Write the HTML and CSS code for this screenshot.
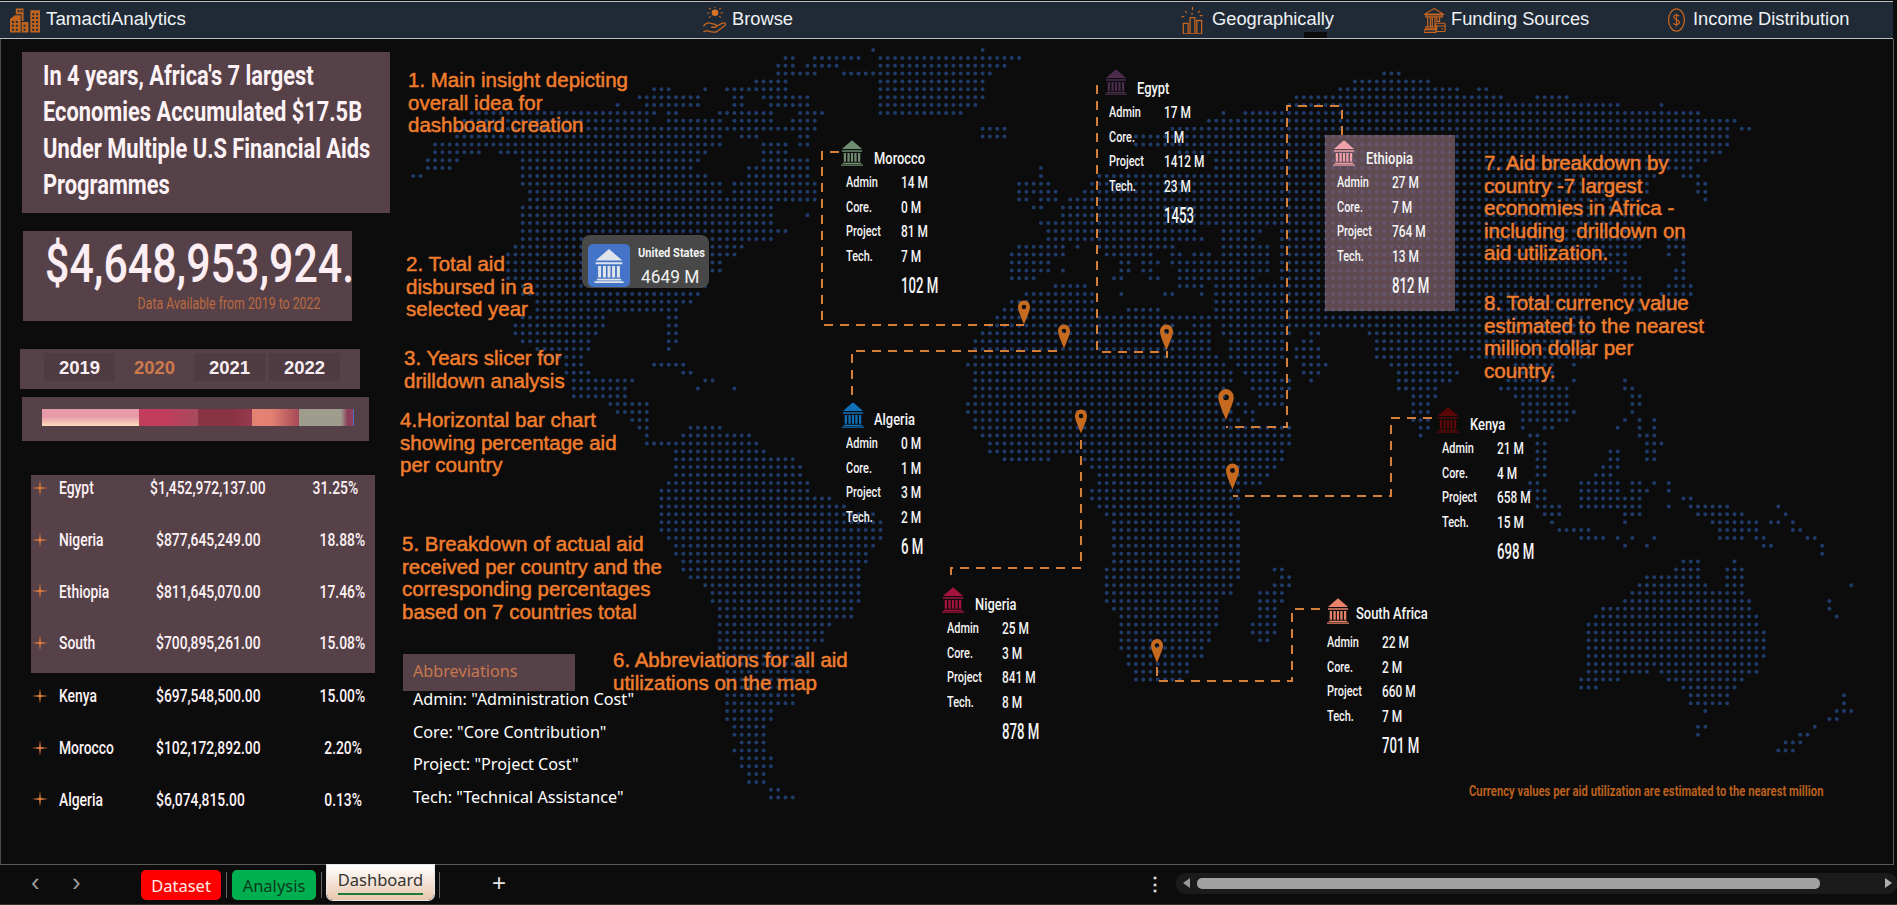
FILE: index.html
```html
<!DOCTYPE html>
<html lang="en">
<head>
<meta charset="utf-8">
<title>TamactiAnalytics Dashboard</title>
<link rel="stylesheet" href="styles.css">
</head>
<body>
<svg class="defs" width="0" height="0" aria-hidden="true">
  <symbol id="bank" viewBox="0 0 24 28">
    <path d="M12 0 23 9.5H1ZM1 11H23V12.5H1ZM3 14H5.5V23.5H3ZM7 14H9.5V23.5H7ZM10.8 14H13.2V23.5H10.8ZM14.5 14H17V23.5H14.5ZM18.5 14H21V23.5H18.5ZM2 24.5H22V26H2ZM0 26.5H24V28H0Z"/>
  </symbol>
  <symbol id="pin" viewBox="0 0 16 32">
    <path fill-rule="evenodd" d="M8 0C3.6 0 0 3.8 0 8.6 0 14 5.4 25 8 32 10.6 25 16 14 16 8.6 16 3.8 12.4 0 8 0ZM8 5.6A3 3 0 1 1 8 11.6 3 3 0 1 1 8 5.6Z"/>
  </symbol>
  <symbol id="star" viewBox="0 0 16 16">
    <path d="M8 0 8.9 7.1 16 8 8.9 8.9 8 16 7.1 8.9 0 8 7.1 7.1Z"/>
  </symbol>
</svg>

<div class="app">
  <header class="topbar">
    <div class="brand">
      <svg class="logo" viewBox="0 0 31 25">
        <path d="M0 11 5 7H11V25H0ZM12 14H19V25H12ZM21 2H31V25H21ZM6 0H14V13H12V6H6Z"/>
        <path class="win" d="M2 13h2v2H2zM6 13h2v2H6zM2 17h2v2H2zM6 17h2v2H6zM2 21h2v2H2zM6 21h2v2H6zM14 17h2v2h-2zM14 21h2v2h-2zM23 5h2v2h-2zM27 5h2v2h-2zM23 9h2v2h-2zM27 9h2v2h-2zM23 13h2v2h-2zM27 13h2v2h-2zM23 17h2v2h-2zM27 17h2v2h-2zM23 21h2v2h-2zM27 21h2v2h-2zM8 2h2v2H8zM11 2h2v2h-2z"/>
      </svg>
      <span>TamactiAnalytics</span>
    </div>
    <div class="nav nav-browse">
      <svg class="nav-icon" viewBox="0 0 26 28">
        <circle class="fill" cx="13" cy="6" r="3.4"/>
        <path d="M13 0v1M5 6H7M19 6h2M7 1l1.5 1.5M19 1l-1.5 1.5M7 11l1.5-1.5M19 11l-1.5-1.5"/>
        <path d="M1 20c2-3 5-4 8-3l4 1c2 .6 2 3 0 3H9M13 21l7-4c3-1.5 5 .5 3 2.500l-8 6c-3 1.500-7 0-10-1l-4 1"/>
      </svg>
      <span>Browse</span>
    </div>
    <div class="nav nav-geo">
      <svg class="nav-icon" viewBox="0 0 24 28">
        <path d="M3 17h5v11H3zM10 11h5v17h-5zM17 14h5v14h-5zM12.500 0v3M5 4l1.500 2M20 4l-1.500 2M1 10h3M20 9h3M12 6v2"/>
      </svg>
      <span>Geographically</span>
      <i class="nav-mark"></i>
    </div>
    <div class="nav nav-fund">
      <svg class="nav-icon" viewBox="0 0 24 28">
        <path d="M11 1 21 7H1ZM2 8h18v2H2ZM4 10h3v11H4ZM9 10h3v11H9ZM14 10h3v5h-3ZM2 21h12v2H2ZM0 24h13v3H0Z"/>
        <rect x="13" y="17" width="10" height="9" rx="1"/>
        <path d="M13 20h10M19 23h2"/>
      </svg>
      <span>Funding Sources</span>
    </div>
    <div class="nav nav-income">
      <svg class="nav-icon" viewBox="0 0 20 28">
        <ellipse cx="10" cy="14" rx="8.500" ry="12"/>
        <path d="M13 10c-1-2-6-2-6 1 0 3 6 2 6 5.500 0 3-5 3-6.500 1M10 7v14"/>
      </svg>
      <span>Income Distribution</span>
    </div>
  </header>

  <main class="canvas">
    <svg class="map" viewBox="0 39 1897 826" width="1897" height="826" aria-hidden="true">
      <path id="dots" class="dots"/>
      <g class="leads">
        <path d="M839 152H822V325H1024"/>
        <path d="M852 395V351H1064"/>
        <path d="M1097 85V352H1167V358"/>
        <path d="M1342 135V106H1287V427H1226"/>
        <path d="M1432 418H1391V496H1233"/>
        <path d="M1081 440V568H951V575"/>
        <path d="M1320 609H1292V681H1157V665"/>
      </g>
      <g class="pins">
        <use href="#pin" x="1018" y="299" width="12" height="27"/>
        <use href="#pin" x="1058" y="321" width="12" height="31"/>
        <use href="#pin" x="1160" y="322" width="13" height="31"/>
        <use href="#pin" x="1218" y="389" width="16" height="31"/>
        <use href="#pin" x="1075" y="406" width="12" height="31"/>
        <use href="#pin" x="1226" y="461" width="13" height="31"/>
        <use href="#pin" x="1151" y="637" width="12" height="28"/>
      </g>
    </svg>

    <section class="left">
      <div class="card hero din">
        <p>In 4 years, Africa's 7 largest</p>
        <p>Economies Accumulated $17.5B</p>
        <p>Under Multiple U.S Financial Aids</p>
        <p>Programmes</p>
      </div>
      <div class="card total din">
        <div class="total-value">$4,648,953,924.</div>
        <div class="total-note">Data Available from 2019 to 2022</div>
      </div>
      <div class="card slicer">
        <span class="year">2019</span>
        <span class="year year-on">2020</span>
        <span class="year">2021</span>
        <span class="year">2022</span>
      </div>
      <div class="card barcard">
        <div class="stack">
          <i class="seg seg1"></i><i class="seg seg2"></i><i class="seg seg3"></i><i class="seg seg4"></i><i class="seg seg5"></i><i class="seg seg6"></i>
        </div>
      </div>
      <div class="table din">
        <div class="table-hi">
          <div class="row"><svg class="star"><use href="#star"/></svg><span>Egypt</span><span class="amt amt-wide">$1,452,972,137.00</span><span class="pct pct-in">31.25%</span></div>
          <div class="row"><svg class="star"><use href="#star"/></svg><span>Nigeria</span><span class="amt">$877,645,249.00</span><span class="pct">18.88%</span></div>
          <div class="row"><svg class="star"><use href="#star"/></svg><span>Ethiopia</span><span class="amt">$811,645,070.00</span><span class="pct">17.46%</span></div>
          <div class="row"><svg class="star"><use href="#star"/></svg><span>South</span><span class="amt">$700,895,261.00</span><span class="pct">15.08%</span></div>
        </div>
        <div class="row"><svg class="star"><use href="#star"/></svg><span>Kenya</span><span class="amt">$697,548,500.00</span><span class="pct">15.00%</span></div>
        <div class="row"><svg class="star"><use href="#star"/></svg><span>Morocco</span><span class="amt">$102,172,892.00</span><span class="pct pct-mid">2.20%</span></div>
        <div class="row"><svg class="star"><use href="#star"/></svg><span>Algeria</span><span class="amt">$6,074,815.00</span><span class="pct pct-mid">0.13%</span></div>
      </div>
    </section>

    <p class="note n1">1. Main insight depicting<br>overall idea for<br>dashboard creation</p>
    <p class="note n2">2. Total aid<br>disbursed in a<br>selected year</p>
    <p class="note n3">3. Years slicer for<br>drilldown analysis</p>
    <p class="note n4">4.Horizontal bar chart<br>showing percentage aid<br>per country</p>
    <p class="note n5">5. Breakdown of actual aid<br>received per country and the<br>corresponding percentages<br>based on 7 countries total</p>
    <p class="note n6">6. Abbreviations for all aid<br>utilizations on the map</p>
    <p class="note n7">7. Aid breakdown by<br>country -7 largest<br>economies in Africa -<br>including&nbsp; drilldown on<br>aid utilization.</p>
    <p class="note n8">8. Total currency value<br>estimated to the nearest<br>million dollar per<br>country.</p>

    <section class="abbr">
      <h2 class="abbr-title">Abbreviations</h2>
      <p>Admin: "Administration Cost"</p>
      <p>Core: "Core Contribution"</p>
      <p>Project: "Project Cost"</p>
      <p>Tech: "Technical Assistance"</p>
    </section>

    <div class="us din">
      <div class="us-tile"><svg class="us-bank"><use href="#bank"/></svg></div>
      <div class="us-text"><b>United States</b><span>4649 M</span></div>
    </div>

    <article class="callout din c-morocco">
      <svg class="bank"><use href="#bank"/></svg><h3>Morocco</h3>
      <span>Admin</span><b>14 M</b><span>Core.</span><b>0 M</b><span>Project</span><b>81 M</b><span>Tech.</span><b>7 M</b><span></span><strong>102 M</strong>
    </article>
    <article class="callout din c-egypt">
      <svg class="bank"><use href="#bank"/></svg><h3>Egypt</h3>
      <span>Admin</span><b>17 M</b><span>Core.</span><b>1 M</b><span>Project</span><b>1412 M</b><span>Tech.</span><b>23 M</b><span></span><strong>1453</strong>
    </article>
    <article class="callout din c-ethiopia">
      <svg class="bank"><use href="#bank"/></svg><h3>Ethiopia</h3>
      <span>Admin</span><b>27 M</b><span>Core.</span><b>7 M</b><span>Project</span><b>764 M</b><span>Tech.</span><b>13 M</b><span></span><strong>812 M</strong>
    </article>
    <article class="callout din c-algeria">
      <svg class="bank"><use href="#bank"/></svg><h3>Algeria</h3>
      <span>Admin</span><b>0 M</b><span>Core.</span><b>1 M</b><span>Project</span><b>3 M</b><span>Tech.</span><b>2 M</b><span></span><strong>6 M</strong>
    </article>
    <article class="callout din c-kenya">
      <svg class="bank"><use href="#bank"/></svg><h3>Kenya</h3>
      <span>Admin</span><b>21 M</b><span>Core.</span><b>4 M</b><span>Project</span><b>658 M</b><span>Tech.</span><b>15 M</b><span></span><strong>698 M</strong>
    </article>
    <article class="callout din c-nigeria">
      <svg class="bank"><use href="#bank"/></svg><h3>Nigeria</h3>
      <span>Admin</span><b>25 M</b><span>Core.</span><b>3 M</b><span>Project</span><b>841 M</b><span>Tech.</span><b>8 M</b><span></span><strong>878 M</strong>
    </article>
    <article class="callout din c-south">
      <svg class="bank"><use href="#bank"/></svg><h3>South Africa</h3>
      <span>Admin</span><b>22 M</b><span>Core.</span><b>2 M</b><span>Project</span><b>660 M</b><span>Tech.</span><b>7 M</b><span></span><strong>701 M</strong>
    </article>

    <p class="foot din">Currency values per aid utilization are estimated to the nearest million</p>
  </main>

  <footer class="tabs">
    <span class="arrow arrow-l">&#x2039;</span>
    <span class="arrow arrow-r">&#x203A;</span>
    <span class="tab tab-red">Dataset</span><i class="tab-sep"></i>
    <span class="tab tab-green">Analysis</span><i class="tab-sep"></i>
    <span class="tab tab-active"><u>Dashboard</u></span><i class="tab-sep"></i>
    <span class="tab-add">+</span>
    <span class="tab-more">&#8942;</span>
    <div class="scroll">
      <i class="scroll-l"></i>
      <i class="scroll-thumb"></i>
      <i class="scroll-r"></i>
    </div>
  </footer>
</div>
<script src="map.js"></script>
</body>
</html>
```
FILE: styles.css
```css
* { box-sizing: border-box; }
html, body { margin: 0; height: 100%; overflow: hidden; background: #0c0c0c; }
p, h2, h3 { margin: 0; font-weight: inherit; font-size: inherit; }
.defs { position: absolute; }

.din { font-family: Roboto, sans-serif; }

.app { width: 1897px; height: 905px; display: flex; flex-direction: column; }

/* top bar */
.topbar {
  height: 38px; width: 1893px; flex: none; display: flex; align-items: center; position: relative;
  background: #1f2a36; border-top: 1px solid #b9bdc0; border-bottom: 1px solid #b9bdc0; margin-top: 1px;
  font: 18.300px "Liberation Sans", sans-serif; color: #eef1f4;
}
.topbar span { margin-top: -3px; }
.brand { display: flex; align-items: center; gap: 6px; margin-left: 10px; width: 692px; font-size: 18.800px; }
.logo { width: 30px; height: 25px; fill: #bf641f; }
.logo .win { fill: #1f2a36; }
.nav { display: flex; align-items: center; gap: 4px; position: relative; }
.nav-icon { width: 26px; height: 27px; fill: none; stroke: #c8651f; stroke-width: 1.300; }
.nav-icon .fill { fill: #d9752a; stroke: none; }
.nav-browse { width: 478px; }
.nav-geo { width: 244px; gap: 8px; }
.nav-geo .nav-icon { width: 24px; }
.nav-fund { width: 243px; gap: 5px; }
.nav-fund .nav-icon { width: 22px; height: 29px; }
.nav-income { gap: 7px; }
.nav-income .nav-icon { width: 19px; height: 26px; }
.nav-mark { position: absolute; left: 124px; top: 25px; width: 23px; height: 6px; background: #0c0c0c; }

/* canvas */
.canvas {
  position: relative; flex: none; width: 1894px; height: 826px; background: #0c0c0c;
  border-left: 1px solid #4a4a4a; border-right: 1px solid #5a5a5a; border-bottom: 1px solid #5a5a5a;
}
.map { position: absolute; left: -1px; top: 0; }
.dots { fill: none; stroke: #1f3b68; stroke-width: 4; stroke-linecap: round; }
.leads path { fill: none; stroke: #d67f38; stroke-width: 2; stroke-dasharray: 9 7; }
.pins { fill: #c56a1e; }

/* left column */
.left { position: relative; display: flex; flex-direction: column; align-items: flex-start; padding-top: 13px; }
.card { background: #574148; }
.hero {
  margin-left: 21px; width: 368px; height: 161px; padding: 6px 0 0 21px;
  color: #fdf3f6; font-size: 28px; font-weight: 700; line-height: 36.300px;
}
.hero p { width: max-content; white-space: nowrap; transform: scaleX(.78); transform-origin: left center; }
.total { margin: 18px 0 0 22px; width: 329px; height: 90px; position: relative; color: #fdeef3; padding: 3px 0 0 22px; }
.total-value { width: max-content; font-size: 53px; line-height: 60px; font-weight: 500; white-space: nowrap; transform: scaleX(.81); transform-origin: left center; }
.total-note { position: absolute; right: 32px; bottom: 8px; font-size: 16px; line-height: 18px; color: #b96a40; white-space: nowrap; transform: scaleX(.77); transform-origin: right center; }
.slicer { margin: 28px 0 0 19px; width: 340px; height: 40px; display: flex; padding: 4px 0 0 24px; gap: 4px; }
.year {
  width: 71px; height: 28px; text-align: center; font: 700 18.500px/29px "Liberation Sans", sans-serif; color: #f8eef3;
  background: conic-gradient(#46353b 25%, transparent 0 50%, #46353b 0 75%, transparent 0) 0 0 / 2px 2px;
}
.year-on { background: none; color: #cc7a4c; }
.barcard { margin: 8px 0 0 21px; width: 347px; height: 44px; padding: 12px 0 0 20px; }
.stack { display: flex; width: 312px; height: 17px; }
.seg { display: block; height: 100%; }
.seg1 { width: 97px; background: linear-gradient(#e79aa8 45%, #fcdcbc); }
.seg2 { width: 59px; background: linear-gradient(90deg, #c23c5c 40%, #a84a5e); }
.seg3 { width: 54px; background: linear-gradient(90deg, #8a3343 60%, #96394f); }
.seg4 { width: 47px; background: linear-gradient(90deg, #e38272 40%, #a64a58); }
.seg5 { width: 42px; background: #9e9c8d; }
.seg6 { width: 13px; background: linear-gradient(90deg, #9e9c8d, #8c3f5d 50%, #8c3f5d 90%, #5a6ac0 90%); }

.table { margin: 34px 0 0 30px; width: 344px; color: #fdf3f6; font-size: 18px; font-weight: 500; }
.table-hi { display: flow-root; background: #574148; height: 198px; margin-bottom: -3px; }
.row { display: grid; grid-template-columns: 28px 97px 164px 55px; align-items: center; height: 51.700px; white-space: nowrap; }
.table-hi .row:first-child { margin-top: -13px; }
.row span { justify-self: start; transform: scaleX(.77); transform-origin: left center; }
.row .pct { justify-self: end; margin-right: 10px; transform-origin: right center; }
.star { width: 18px; height: 16px; fill: #db7a3e; margin-left: 0; }
.row .amt-wide { margin-left: -6px; }
.row .pct-in { margin-right: 17px; }
.row .pct-mid { margin-right: 13px; }

/* annotations */
.note {
  position: absolute; font: 20.500px/22.500px "Liberation Sans", sans-serif; color: #ef7d2d;
  -webkit-text-stroke: .5px #ef7d2d; white-space: nowrap;
}
.n1 { left: 407px; top: 30px; }
.n2 { left: 405px; top: 214px; }
.n3 { left: 403px; top: 308px; }
.n4 { left: 399px; top: 370px; }
.n5 { left: 401px; top: 494px; }
.n6 { left: 612px; top: 610px; }
.n7 { left: 1483px; top: 113px; }
.n8 { left: 1483px; top: 253px; }

/* abbreviations */
.abbr { position: absolute; left: 402px; top: 615px; font: 16.200px/32.600px "Noto Sans", sans-serif; color: #fff; }
.abbr p { padding-left: 10px; white-space: nowrap; }
.abbr-title { width: 172px; height: 37px; padding-left: 10px; background: #574148; color: #c7784d; line-height: 35px; margin-bottom: -8px; }

/* US tag */
.us { position: absolute; left: 581px; top: 196px; width: 127px; height: 53px; border-radius: 8px; background: #484848; display: flex; gap: 8px; padding: 9px 0 0 6px; color: #f2f2f2; }
.us-tile { flex: none; width: 42px; height: 43px; border-radius: 5px; background: #4474c8; display: flex; align-items: center; justify-content: center; }
.us-bank { width: 30px; height: 34px; fill: #dfe3ea; }
.us-text b { display: block; width: max-content; font-size: 13px; line-height: 17px; white-space: nowrap; transform: scaleX(.85); transform-origin: left center; }
.us-text span { display: block; width: max-content; margin: 5px 0 0 3px; font-size: 18px; line-height: 22px; white-space: nowrap; transform: scaleX(.96); transform-origin: left center; }

/* country call-outs */
.callout {
  position: absolute; display: grid; grid-template-columns: 55px auto; grid-auto-rows: 24.500px; align-items: center;
  font-size: 14px; font-weight: 500; color: #f5f5f5; padding-top: 30px; white-space: nowrap;
}
.callout > span, .callout > b, .callout > strong { justify-self: start; transform-origin: left center; }
.callout > span { transform: scaleX(.78); }
.callout h3 { position: absolute; left: 28px; top: 8px; font-size: 17px; line-height: 20px; transform: scaleX(.76); transform-origin: left center; }
.callout .bank { position: absolute; left: -5px; top: 0; width: 22px; height: 26px; }
.callout b { font-weight: 500; font-size: 17px; transform: scaleX(.7); }
.callout strong { font-weight: 500; font-size: 22px; padding-top: 10px; transform: scaleX(.6); }
.c-morocco { left: 845px; top: 101px; }
.c-morocco .bank { fill: #6e8c70; }
.c-egypt { left: 1108px; top: 31px; }
.c-egypt .bank { left: -4px; top: -1px; fill: #4b2c4d; }
.c-ethiopia { left: 1324px; top: 96px; width: 130px; height: 176px; padding: 35px 0 0 12px; background: rgba(128, 98, 110, .72); }
.c-ethiopia h3 { left: 41px; top: 13px; }
.c-ethiopia .bank { left: 8px; top: 5px; fill: #eda1a9; }
.c-algeria { left: 845px; top: 362px; }
.c-algeria .bank { left: -4px; top: 1px; fill: #1070b8; }
.c-kenya { left: 1441px; top: 367px; }
.c-kenya .bank { top: 1px; fill: #5c0707; }
.c-nigeria { left: 946px; top: 547px; }
.c-nigeria .bank { top: 1px; fill: #a5133c; }
.c-south { left: 1326px; top: 561px; }
.c-south .bank { left: 0; top: -2px; fill: #e8836a; }
.c-south h3 { left: 29px; top: 3px; }
.foot { position: absolute; left: 1468px; top: 744px; font-size: 14px; font-weight: 700; color: #b85f1c; white-space: nowrap; transform: scaleX(.805); transform-origin: left center; }

/* bottom tabs */
.tabs { position: relative; flex: none; height: 40px; width: 100%; display: flex; align-items: flex-start; background: #0c0c0c; border-bottom: 1px solid #333; font-family: "Noto Sans", sans-serif; }
.arrow { position: absolute; top: 2px; font: 300 26px/30px "Liberation Sans", sans-serif; color: #9a9a9a; }
.arrow-l { left: 31px; }
.arrow-r { left: 72px; }
.tab { height: 30px; margin-top: 5px; text-align: center; font-size: 16.500px; line-height: 31px; border-radius: 5px; }
.tab-red { margin-left: 141px; width: 80px; background: #fe0000; color: #ffe9e9; }
.tab-green { width: 84px; background: #00b050; color: #0e3a1c; }
.tab-active { width: 107px; height: 35px; margin-top: 0; border-radius: 0 0 6px 6px; background: linear-gradient(#fff, #e8c6ac); color: #333; line-height: 29px; box-shadow: 0 0 0 1px #e8e8e8; }
.tab-active u { text-decoration: none; display: inline-block; border-bottom: 2px solid #1e7a3c; line-height: 26px; }
.tab-sep { display: block; width: 1px; height: 26px; margin: 7px 5px 0; background: #666; }
.tab-add { position: absolute; left: 492px; top: 3px; font: 300 24px/30px "Liberation Sans", sans-serif; color: #e6e6e6; }
.tab-more { position: absolute; left: 1146px; top: 4px; font: 700 18px/30px "Liberation Sans", sans-serif; color: #e0e0e0; }
.scroll { position: absolute; left: 1176px; top: 8px; width: 721px; height: 21px; border-radius: 9px; background: #1b1b1b; }
.scroll-thumb { position: absolute; left: 21px; top: 5px; width: 623px; height: 11px; border-radius: 5px; background: #a2a2a2; }
.scroll-l, .scroll-r { position: absolute; top: 5px; border-style: solid; border-width: 5.500px 0; border-color: transparent; }
.scroll-l { left: 7px; border-right: 7px solid #9a9a9a; }
.scroll-r { right: 5px; border-left: 7px solid #b0b0b0; }
```
FILE: map.js
```js
// Dot-matrix world map: each entry lists the land spans [x1,x2,...] of one grid row.
var ROWS = [
[873,873,986,986],
[782,794,812,860,879,1020],
[776,794,806,838,879,1005],
[776,815,842,992,1382,1400],
[752,788,879,985,1355,1430],
[654,672,703,703,727,757,763,788,879,983,1340,1457,1478,1487],
[636,697,730,742,763,809,879,983,1294,1502,1536,1569],
[616,616,642,697,733,742,770,809,879,977,1288,1620,1662,1662],
[472,654,670,678,718,757,761,776,800,824,879,962,1222,1222,1246,1702],
[463,648,670,721,730,770,790,818,1204,1738],
[455,721,727,770,779,818,980,1007,1173,1730,1741,1750],
[455,721,739,757,797,809,980,1007,1131,1729],
[433,721,763,788,800,809,1131,1729],
[433,479,500,709,760,788,1180,1725],
[424,457,521,697,760,809,1215,1710],
[424,448,521,694,751,809,1041,1041,1215,1690],
[412,421,521,706,748,809,1041,1041,1100,1655,1683,1700],
[521,721,733,815,1018,1050,1090,1650,1693,1707],
[527,721,733,818,1018,1057,1085,1650,1697,1707],
[527,818,1018,1030,1040,1057,1068,1640,1705,1705],
[521,776,1033,1040,1062,1640],
[521,776,806,806,1062,1640],
[521,685,690,776,1040,1640],
[521,676,685,788,1047,1193,1223,1260,1283,1640],
[521,679,709,776,1047,1193,1203,1203,1223,1253,1283,1640,1670,1687],
[515,742,1018,1063,1077,1077,1100,1173,1220,1267,1280,1640,1667,1687],
[506,737,1012,1063,1107,1153,1173,1180,1193,1213,1222,1270,1280,1630,1668,1668,1684,1684],
[506,721,1012,1050,1120,1130,1142,1157,1170,1270,1280,1630,1684,1684],
[506,720,1012,1050,1063,1063,1120,1127,1142,1153,1177,1270,1280,1625,1675,1684],
[509,710,1012,1033,1113,1123,1150,1160,1178,1253,1280,1603,1627,1643,1677,1683],
[521,709,1053,1083,1180,1200,1213,1597,1627,1640,1667,1693],
[521,697,1027,1093,1120,1120,1163,1173,1200,1200,1213,1590,1626,1640,1660,1690],
[533,691,1012,1093,1213,1585,1630,1640,1660,1680],
[533,679,1003,1093,1127,1160,1213,1580,1630,1640,1650,1670],
[521,606,667,679,995,1590],
[515,606,667,679,988,1177,1190,1210,1220,1590],
[515,597,667,679,980,1210,1220,1293,1310,1323,1370,1590],
[521,591,667,676,973,1210,1227,1287,1300,1313,1373,1590],
[533,591,667,667,973,1212,1230,1285,1295,1320,1375,1590],
[545,585,973,1220,1230,1283,1293,1323,1377,1450,1470,1590],
[563,582,651,685,967,1227,1237,1277,1303,1327,1393,1453,1512,1554,1573,1573],
[563,588,682,694,973,1230,1243,1277,1300,1320,1397,1457,1512,1554],
[570,636,703,715,973,1230,1250,1290,1310,1310,1397,1450,1507,1557,1573,1573,1627,1627],
[575,630,697,697,733,733,973,1227,1253,1290,1400,1440,1500,1567,1627,1633],
[572,627,973,1223,1257,1280,1410,1437,1515,1567,1630,1640],
[609,645,967,1227,1237,1247,1260,1280,1413,1433,1523,1567,1633,1640],
[615,648,967,1230,1245,1255,1410,1430,1523,1577,1633,1633],
[630,648,973,1237,1250,1253,1410,1428,1520,1567,1627,1627,1640,1640,1655,1655],
[636,648,688,721,973,1290,1420,1430,1523,1523,1540,1555,1618,1618,1640,1640,1655,1655],
[642,648,682,751,980,1290,1420,1420,1530,1540,1640,1657],
[645,757,988,1290,1536,1548,1645,1660],
[672,763,988,1285,1533,1545,1608,1620,1645,1656],
[676,794,1004,1050,1080,1282,1533,1545,1608,1620,1645,1656],
[676,803,1092,1276,1533,1548,1602,1620],
[672,800,1098,1270,1533,1545,1596,1611],
[670,806,1098,1264,1530,1542,1581,1620,1632,1641,1653,1653,1668,1668],
[660,806,1089,1240,1530,1545,1581,1620,1630,1650,1668,1668],
[660,830,1092,1240,1536,1548,1581,1620,1623,1641,1684,1693],
[660,848,1098,1240,1539,1560,1581,1620,1626,1641,1668,1668,1690,1730,1780,1780],
[660,872,1104,1234,1545,1560,1626,1641,1699,1745,1786,1786],
[660,882,1110,1240,1554,1554,1626,1626,1714,1760,1771,1780,1792,1792],
[660,882,1110,1240,1560,1590,1720,1760,1792,1802],
[667,882,1110,1240,1581,1605,1617,1617,1632,1632,1653,1653,1720,1745,1756,1765,1807,1817],
[676,872,1110,1240,1626,1626,1647,1647,1762,1771,1817,1823],
[676,866,1113,1240,1822,1822],
[682,866,1113,1240,1684,1699,1735,1735],
[682,860,1104,1240,1276,1282,1675,1699,1726,1744],
[691,860,1104,1240,1279,1291,1647,1699,1726,1744],
[703,860,1104,1234,1273,1291,1638,1705,1726,1744,1850,1850],
[712,860,1104,1234,1258,1282,1632,1747],
[712,860,1107,1219,1258,1282,1623,1750,1829,1829],
[718,854,1110,1219,1258,1276,1602,1750,1829,1829],
[718,854,1119,1219,1258,1273,1593,1759,1838,1838],
[718,833,1119,1219,1252,1276,1587,1759],
[718,824,1119,1210,1252,1276,1587,1765],
[718,824,1119,1210,1258,1270,1587,1765],
[718,812,1119,1204,1587,1765],
[718,806,1125,1204,1587,1765],
[724,806,1125,1192,1587,1759],
[724,806,1134,1188,1587,1650,1660,1759],
[724,794,1134,1182,1581,1620,1669,1741],
[724,794,1581,1599,1684,1738],
[724,794,1690,1729,1844,1844],
[727,794,1690,1729,1844,1844],
[727,770,1705,1705,1838,1853],
[727,773,1829,1838],
[733,764,1699,1705,1816,1816],
[733,764,1693,1702,1801,1808],
[739,764,1786,1801],
[733,764,1777,1795],
[739,773],
[739,773],
[745,764],
[745,764],
[768,779],
[768,794]
];
var PITCH_X = 7.3, PITCH_Y = 7.87, ORIGIN_X = 1041, ORIGIN_Y = 50;
var d = [];
ROWS.forEach(function (spans, n) {
  var y = (ORIGIN_Y + n * PITCH_Y).toFixed(1);
  for (var i = 0; i < spans.length; i += 2) {
    var a = Math.ceil((spans[i] - 2 - ORIGIN_X) / PITCH_X);
    var b = Math.floor((spans[i + 1] + 2 - ORIGIN_X) / PITCH_X);
    if (b < a) { b = a = Math.round((spans[i] - ORIGIN_X) / PITCH_X); }
    for (var k = a; k <= b; k++) {
      d.push('M' + (ORIGIN_X + k * PITCH_X).toFixed(1) + ' ' + y + 'h0');
    }
  }
});
document.getElementById('dots').setAttribute('d', d.join(''));
```
